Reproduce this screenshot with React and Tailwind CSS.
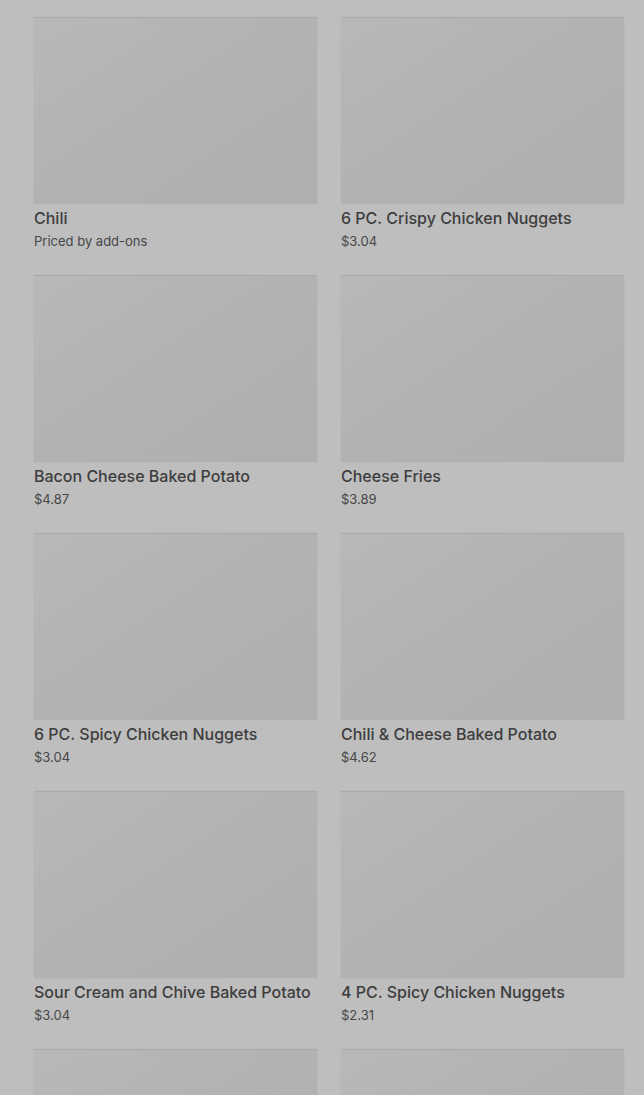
import React from 'react';

const items = [
  { name: 'Chili', price: 'Priced by add-ons' },
  { name: '6 PC. Crispy Chicken Nuggets', price: '$3.04' },
  { name: 'Bacon Cheese Baked Potato', price: '$4.87' },
  { name: 'Cheese Fries', price: '$3.89' },
  { name: '6 PC. Spicy Chicken Nuggets', price: '$3.04' },
  { name: 'Chili & Cheese Baked Potato', price: '$4.62' },
  { name: 'Sour Cream and Chive Baked Potato', price: '$3.04' },
  { name: '4 PC. Spicy Chicken Nuggets', price: '$2.31' },
  { name: 'Plain Baked Potato', price: '$2.49' },
  { name: '10 PC. Crispy Chicken Nuggets', price: '$4.99' },
];

export default function App() {
  return (
    <div
      className="h-screen w-full overflow-hidden bg-[#bebebe] pt-[17px] pl-[34px] pr-[20px]"
      style={{ fontFamily: 'Inter, Roboto, sans-serif' }}
    >
      <div className="grid grid-cols-2 gap-x-[24px] gap-y-[25px]">
        {items.map((item) => (
          <div key={item.name} className="flex flex-col">
            <div className="h-[187px] w-full border-t border-[#ababab] bg-gradient-to-br from-[#b8b8b8] via-[#b2b2b2] to-[#afafaf] shadow-[0_0_1px_rgba(0,0,0,0.12)]" />
            <div className="mt-[4px] text-[16px] leading-[20px] font-medium text-[#3d3d3d]">
              {item.name}
            </div>
            <div className="mt-[4px] text-[13px] leading-[18px] text-[#474747]">
              {item.price}
            </div>
          </div>
        ))}
      </div>
    </div>
  );
}
